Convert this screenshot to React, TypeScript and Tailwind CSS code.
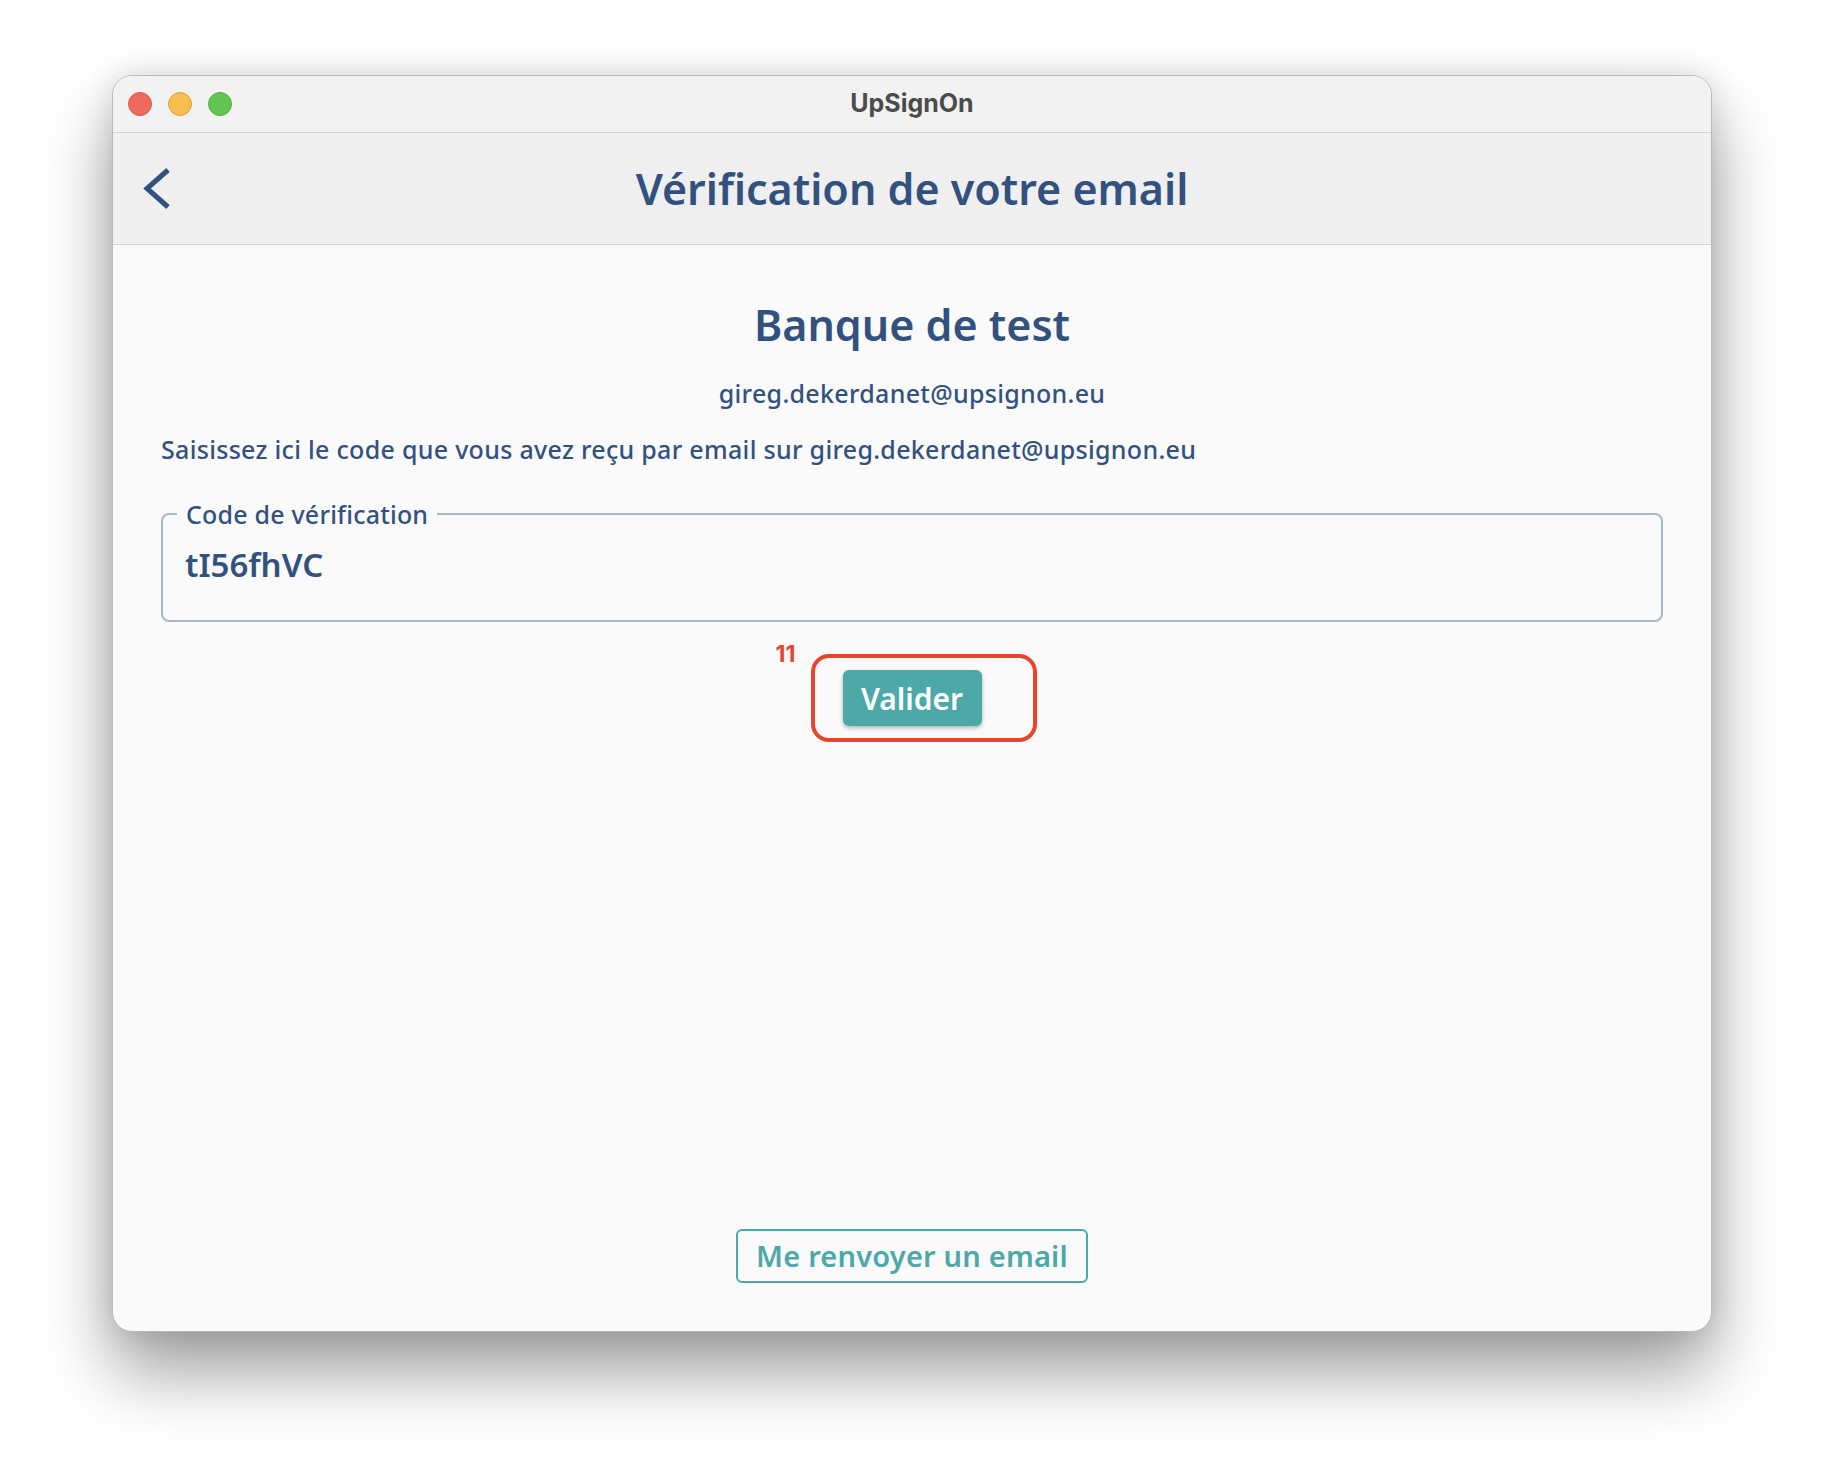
import React from 'react';

const BackChevron = () => (
  <svg width="30" height="44" viewBox="0 0 30 44" fill="none">
    <path d="M26 3 L5 21.5 L26 40" stroke="#33517f" strokeWidth="5" />
  </svg>
);

const TrafficLights = () => (
  <div className="flex items-center gap-4">
    <span className="block h-6 w-6 rounded-full border border-[#d9574b] bg-[#ee6a5f]" />
    <span className="block h-6 w-6 rounded-full border border-[#dca13b] bg-[#f5be4f]" />
    <span className="block h-6 w-6 rounded-full border border-[#4fae44] bg-[#62c554]" />
  </div>
);

const App = () => {
  return (
    <div className="w-full h-[1480px] bg-white pt-[75px] pl-[112px]" style={{ fontFamily: '"Noto Sans", sans-serif' }}>
      <div className="w-[1600px] h-[1257px] rounded-[20px] overflow-hidden flex flex-col bg-[#fafafa] border border-[#b9b9b9] shadow-[0_40px_70px_rgba(0,0,0,0.38),0_0_30px_rgba(0,0,0,0.12)]">
        {/* Title bar */}
        <div className="h-[57px] shrink-0 grid grid-cols-[160px_1fr_160px] items-center bg-[#f2f2f2] border-b border-[#d2d2d2] pl-[15px]">
          <TrafficLights />
          <div className="text-center text-[25px] leading-[30px] font-bold text-[#4b4b4b] font-['Inter',sans-serif] pr-[15px] pb-[2px]">UpSignOn</div>
          <div />
        </div>

        {/* Header */}
        <div className="h-[112px] shrink-0 grid grid-cols-[160px_1fr_160px] items-center bg-[#efefef] border-b border-[#d2d2d2]">
          <div className="pl-[29px] pt-[1px]">
            <BackChevron />
          </div>
          <h1 className="text-center text-[43px] leading-[56px] font-semibold text-[#33517f]">
            Vérification de votre email
          </h1>
          <div />
        </div>

        {/* Content */}
        <div className="flex-1 flex flex-col items-center px-12 pb-12">
          <h2 className="mt-[54px] text-[43px] leading-[52px] font-semibold text-[#33517f]">Banque de test</h2>
          <p className="mt-[25px] text-[25px] leading-[34px] font-medium tracking-[0.3px] text-[#33517f]">gireg.dekerdanet@upsignon.eu</p>
          <p className="mt-[22px] self-stretch text-[25px] leading-[34px] font-medium tracking-[0.3px] text-[#33517f]">
            Saisissez ici le code que vous avez reçu par email sur gireg.dekerdanet@upsignon.eu
          </p>

          <fieldset className="mt-[32px] self-stretch h-[124px] border-2 border-[#a9b7cb] rounded-lg">
            <legend className="ml-[14px] px-[9px] text-[25px] leading-[32px] font-medium tracking-[0.2px] text-[#33517f]">
              Code de vérification
            </legend>
            <div className="mt-[11px] pl-[22px] text-[33px] leading-[48px] font-semibold text-[#33517f]">tI56fhVC</div>
          </fieldset>

          <div className="relative mt-[48px]">
            <button className="w-[139px] h-[56px] rounded-md bg-[#4da8a8] text-white text-[30px] font-semibold shadow-[0_2px_4px_rgba(0,0,0,0.28)]">
              Valider
            </button>
            <div className="absolute left-[-32px] top-[-16px] w-[226px] h-[88px] rounded-[18px] border-4 border-[#e8432d] pointer-events-none" />
            <span className="absolute left-[-67px] top-[-31px] text-[23px] leading-[30px] font-bold text-[#e8432d] font-['Inter',sans-serif]">11</span>
          </div>

          <div className="flex-1" />

          <button className="w-[352px] h-[54px] rounded-md border-2 border-[#4da8a8] text-[#4da8a8] text-[29px] font-semibold tracking-[0.2px]">
            Me renvoyer un email
          </button>
        </div>
      </div>
    </div>
  );
};

export default App;
